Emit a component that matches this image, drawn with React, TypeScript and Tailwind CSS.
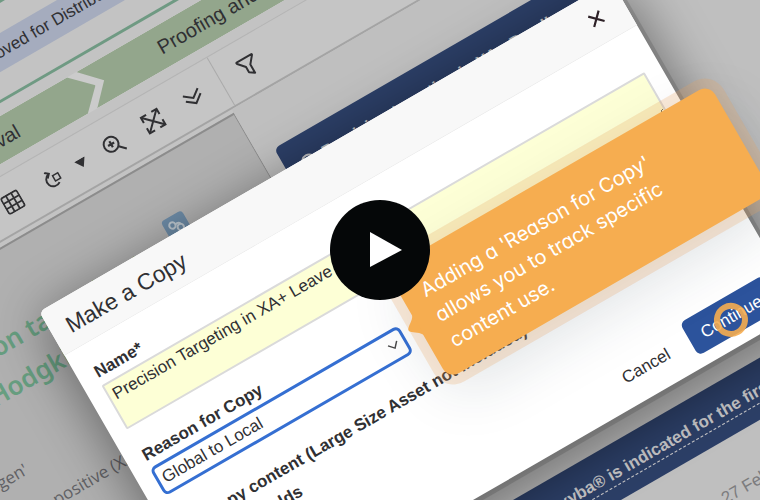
import React from "react";

const ARIAL = "font-['Liberation_Sans',Arial,sans-serif]";

function GridIcon() {
  return (
    <svg width="20" height="20" viewBox="0 0 20 20" fill="none" stroke="#303033" strokeWidth="1.8">
      <rect x="1" y="1" width="18" height="18" rx="2" />
      <path d="M7 1v18M13 1v18M1 7h18M1 13h18" />
    </svg>
  );
}

function RotateIcon() {
  return (
    <svg width="20" height="20" viewBox="0 0 20 20" fill="none" stroke="#303033" strokeWidth="1.9">
      <path d="M9 3.500A7 7 0 1 0 14.500 16" />
      <path d="M5.500 0.300L9.300 3.500L6 7" />
      <rect x="11.500" y="7" width="6" height="6" strokeWidth="1.5" />
    </svg>
  );
}

function ZoomIcon() {
  return (
    <svg width="24" height="24" viewBox="0 0 24 24" fill="none" stroke="#303033" strokeWidth="2">
      <circle cx="10" cy="11" r="7.500" />
      <path d="M15.500 16.500l6 6" strokeWidth="2.200" />
      <path d="M10 7.500v7M6.500 11h7" strokeWidth="2.200" />
    </svg>
  );
}

function ExpandIcon() {
  return (
    <svg width="22" height="22" viewBox="0 0 22 22" fill="none" stroke="#303033" strokeWidth="2">
      <path d="M2.500 2.500l17 17M19.500 2.500l-17 17" />
      <path d="M2 8V2h6M14 2h6v6M20 14v6h-6M8 20H2v-6" />
    </svg>
  );
}

function ChevronsIcon() {
  return (
    <svg width="19" height="18" viewBox="0 0 19 18" fill="none" stroke="#303033" strokeWidth="2">
      <path d="M1 2.500l8.500 6.500l8.500-6.500M1 8.500l8.500 6.500l8.500-6.500" />
    </svg>
  );
}

function FunnelIcon() {
  return (
    <svg width="22" height="22" viewBox="0 0 22 22" fill="none" stroke="#303033" strokeWidth="2" strokeLinejoin="round">
      <path d="M2 2.500Q2 2 3 2h16q1.500 0 .5 1.200L13.500 10.500v9.500l-5-3.500v-6L2.300 3.500z" />
    </svg>
  );
}

function LinkIcon() {
  return (
    <svg width="18" height="18" viewBox="0 0 18 18" fill="none" stroke="#bcc6ce" strokeWidth="2">
      <circle cx="5.500" cy="6" r="3.200" />
      <circle cx="12" cy="11.500" r="3.200" />
      <path d="M8.500 6.500q4-1 5 2" />
    </svg>
  );
}

function ToolButton({ label, width, children }: { label: string; width: string; children: React.ReactNode }) {
  return (
    <button type="button" aria-label={label} className={`flex h-14 items-center justify-center ${width}`}>
      {children}
    </button>
  );
}

function Workspace() {
  return (
    <div className="flex h-full flex-col bg-[#c3c3c3] text-[#303033]">
      <div className="mt-[13px] h-[3px] bg-[#6f9a83]" />
      <div className="mt-[26px] flex h-[34px] items-center bg-[#a5acbe] pl-[199px] text-[17px]">Approved for Distribution</div>
      <div className="mt-6 h-[3px] bg-[#6f9a83]" />
      <div className="mt-[11px] flex h-[42px] bg-[#cbcbcb] text-xl">
        <div className="flex w-[306px] items-center bg-[#93a68c] pl-[138px] [clip-path:polygon(0_0,285px_0,100%_50%,285px_100%,0_100%)]">
          Approval
        </div>
        <div className="-ml-[10px] flex flex-1 items-center bg-[#93a68c] pl-[83px] [clip-path:polygon(0_0,100%_0,100%_100%,0_100%,20px_50%)]">
          Proofing and Distribution
        </div>
      </div>
      <div className="mt-[10px] flex h-[58px] shrink-0 border-t border-b-2 border-t-[#b4b4b4] border-b-[#a4a4a4] bg-[#c5c5c5] pl-[153px]">
        <div className="flex w-[264px] border-r border-[#aaaaaa]">
          <ToolButton label="Thumbnails" width="w-[46px]"><GridIcon /></ToolButton>
          <ToolButton label="Rotate" width="w-[46px]"><RotateIcon /></ToolButton>
          <ToolButton label="Rotate options" width="w-5">
            <svg width="12" height="9" viewBox="0 0 12 9" fill="#303033"><path d="M0 0h12l-6 9z" /></svg>
          </ToolButton>
          <ToolButton label="Zoom in" width="w-[54px]"><ZoomIcon /></ToolButton>
          <ToolButton label="Fit page" width="w-[38px]"><ExpandIcon /></ToolButton>
          <ToolButton label="More tools" width="w-[54px]"><ChevronsIcon /></ToolButton>
        </div>
        <ToolButton label="Filter" width="w-[62px]"><FunnelIcon /></ToolButton>
      </div>
      <div className="flex min-h-0 flex-1">
        <section className="mt-1 w-[412px] shrink-0 overflow-hidden border-t-2 border-r border-[#8c8c8c] bg-[#b0b0b0]">
          <div className="mt-14 ml-[294px] flex size-6 items-center justify-center rounded bg-[#6c8aa5]">
            <LinkIcon />
          </div>
          <h1 className="-mt-[19px] w-[600px] pl-[2px] font-['Noto_Sans',sans-serif] text-[26px] leading-[42px] font-semibold text-[#679e80]">
            Precision targeting in
            <br />
            <span className="pl-14">Hodgkin</span>
          </h1>
          <p className="mt-10 -ml-9 w-96 font-['Open_Sans',sans-serif] text-[17px] leading-[34px] text-[#616165]">
            CD antigen&#39;
          </p>
          <p className="pt-1 pl-[18px] font-['Open_Sans',sans-serif] text-[17px] leading-[42px] whitespace-nowrap text-[#616165]">
            Xylar-positive (XA+)
          </p>
        </section>
        <section className="flex-1 bg-[#bfbfbf] pt-[55px] pl-[17px] font-bold text-[#c4c4c6]">
          <div className="flex h-[54px] w-[370px] items-center gap-2 rounded-t-md bg-[#2c3f67] pt-1 pl-4 text-[17px]">
            <span className="size-4 rounded-full border-2 border-[#c4c4c6]" />
            Precision targeting in XA+ B-cell
          </div>
          <div className="mt-[370px] h-[54px] w-[370px] bg-[#2c3f67] pt-[18px] pl-[50px] text-[17px] leading-5 whitespace-nowrap">
            <span className="underline decoration-dashed decoration-1 underline-offset-6">Zexyba® is indicated for the first time</span>
          </div>
          <p className="mt-[38px] pl-[213px] text-[17px] font-normal text-[#7c7c7e]">27 Feb 2024</p>
        </section>
      </div>
    </div>
  );
}

function CopyDialog() {
  return (
    <form
      onSubmit={(e) => e.preventDefault()}
      className="absolute top-[303px] left-36 w-[661px] rounded-md bg-white text-[17px] leading-5 text-[#303033] shadow-[4px_5px_0_0_rgba(0,0,0,0.12),0_14px_50px_8px_rgba(0,0,0,0.38)]"
    >
      <header className="flex h-[51px] items-center justify-between rounded-t-md border-b border-[#ececec] bg-[#f8f8f8] pr-6 pl-[17px]">
        <h2 className="pt-1 text-[23px]">Make a Copy</h2>
        <button type="button" aria-label="Close">
          <svg width="16" height="16" viewBox="0 0 16 16" fill="none" stroke="#2e2228" strokeWidth="2.200">
            <path d="M2 2l12 12M14 2L2 14" />
          </svg>
        </button>
      </header>
      <div className="flex flex-col px-[17px] pt-[21px]">
        <label htmlFor="name" className="pl-px font-bold">Name*</label>
        <textarea
          id="name"
          defaultValue="Precision Targeting in XA+ Leave"
          className="mt-[3px] h-[51px] resize rounded-xs border-2 border-[#dadada] bg-[#fdffd6] px-1 py-[3px]"
        />
        <label htmlFor="reason" className="mt-[22px] pl-px font-bold">Reason for Copy</label>
        <div className="relative mt-[3px] w-[287px]">
          <select id="reason" className="h-8 w-full appearance-none rounded-md border-3 border-[#356fd2] bg-white px-1">
            <option>Global to Local</option>
          </select>
          <svg className="pointer-events-none absolute top-3 right-2" width="12" height="8" viewBox="0 0 12 8" fill="none" stroke="#4a4a4a" strokeWidth="1.500">
            <path d="M1 1l5 5.500L11 1" />
          </svg>
        </div>
        <label className="mt-[26px] flex items-center gap-4 font-bold">
          <input type="checkbox" className="size-[13px]" />
          Copy content (Large Size Asset not included)
        </label>
        <label className="mt-[7px] flex items-center gap-4 font-bold">
          <input type="checkbox" className="size-[13px]" />
          Copy fields
        </label>
      </div>
      <footer className="mt-[34px] flex items-center justify-end gap-6 px-4 pb-3">
        <button type="button" className="pt-1">Cancel</button>
        <div className="relative">
          <button type="submit" className="h-[38px] rounded-md bg-[#2c539c] px-[14px] pt-1 text-white">Continue</button>
          <span className="absolute top-[6px] left-[29px] size-[34px] rounded-full border-6 border-[#f6ad50]/90" />
        </div>
      </footer>
    </form>
  );
}

function Callout() {
  return (
    <aside className="absolute top-[441px] left-[465px] w-[373px] rounded-xl bg-[#f6ad50] pt-[22px] pb-4 pl-[21px] font-['Inter',sans-serif] text-xl leading-[29px] text-white shadow-[0_0_0_10px_rgba(235,165,90,0.24),0_20px_60px_rgba(20,50,60,0.13)] [font-feature-settings:'cv11']">
      <svg className="absolute top-[50px] -left-[11px]" width="12" height="26" viewBox="0 0 12 26" fill="#f6ad50">
        <path d="M12 0C10 6 4 8 1 11.500Q0 13 1 14.500C4 18 10 20 12 26z" />
      </svg>
      <p>
        Adding a &#39;Reason for Copy&#39;
        <br />
        allows you to track specific
        <br />
        content use.
      </p>
    </aside>
  );
}

export default function App() {
  return (
    <main className={`relative flex h-screen items-center justify-center overflow-hidden bg-[#bfbfbf] ${ARIAL}`}>
      <div className="relative h-[840px] w-[940px] shrink-0 -rotate-30">
        <Workspace />
        <CopyDialog />
        <Callout />
      </div>
      <button type="button" aria-label="Play video" className="absolute flex size-[100px] items-center justify-center rounded-full bg-[#050708]">
        <svg width="44" height="36" viewBox="0 0 44 36" fill="#fff"><path d="M12 0L44 18L12 35z" /></svg>
      </button>
    </main>
  );
}
